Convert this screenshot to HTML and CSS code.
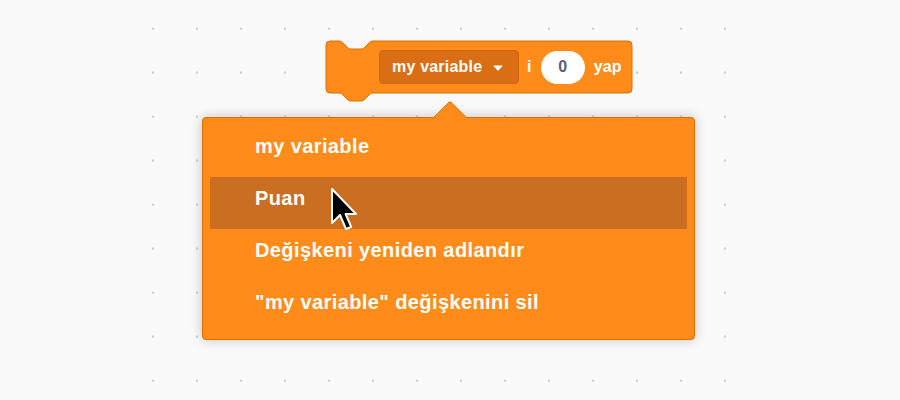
FILE: index.html
```html
<!DOCTYPE html>
<html lang="tr">
<head>
<meta charset="utf-8">
<title>Değişken menüsü</title>
<link rel="stylesheet" href="styles.css">
</head>
<body>
<div class="workspace">
  <div class="grid"></div>

  <div class="block">
    <svg class="block-shape" width="308" height="62" viewBox="-1 -1 308 62">
      <path d="M0,4 A4,4 0 0 1 4,0 H13 c2,0 3,1 4,2 l4,4 c1,1 2,2 4,2 h10 c2,0 3,-1 4,-2 l4,-4 c1,-1 2,-2 4,-2 H302 a4,4 0 0 1 4,4 V48 a4,4 0 0 1 -4,4 H47 c-2,0 -3,1 -4,2 l-4,4 c-1,1 -2,2 -4,2 h-10 c-2,0 -3,-1 -4,-2 l-4,-4 c-1,-1 -2,-2 -4,-2 H4 a4,4 0 0 1 -4,-4 Z" fill="#FF8C1A" stroke="#DB6E00" stroke-width="1"/>
    </svg>
    <div class="block-row">
      <div class="dropdown">
        <span class="dropdown-text">my variable</span>
        <svg class="caret" width="10" height="6" viewBox="0 0 10 6"><path d="M0.8,0.6 H9.2 Q9.8,0.6 9.3,1.2 L5.6,5.2 Q5,5.8 4.4,5.2 L0.7,1.2 Q0.2,0.6 0.8,0.6 Z" fill="#fff"/></svg>
      </div>
      <span class="label">i</span>
      <div class="oval">0</div>
      <span class="label">yap</span>
    </div>
  </div>

  <div class="menu">
    <div class="menu-arrow"></div>
    <ul class="menu-list">
      <li class="menu-item">my variable</li>
      <li class="menu-item is-hover">Puan</li>
      <li class="menu-item">Değişkeni yeniden adlandır</li>
      <li class="menu-item">"my variable" değişkenini sil</li>
    </ul>
  </div>

  <svg class="cursor" width="30" height="46" viewBox="0 0 15 23">
    <path d="M1,1 L1,18 L5,14 L8,21 L10.6,19.9 L7.8,13.5 L13,13.5 Z" fill="#000" stroke="#fff" stroke-width="1" stroke-linejoin="round"/>
  </svg>
</div>
</body>
</html>
```

FILE: styles.css
```css
* {
  box-sizing: border-box;
}

html, body {
  margin: 0;
  padding: 0;
}

body {
  background: #f9f9f9;
  font-family: "Liberation Sans", Arial, sans-serif;
}

.workspace {
  position: relative;
  width: 900px;
  height: 400px;
  overflow: hidden;
  background: #f9f9f9;
}

.grid {
  position: absolute;
  left: 150px;
  top: 25px;
  width: 580px;
  height: 360px;
  background-image: radial-gradient(circle at 3px 3.7px, #cfcfcf 0, #d6d6d6 1px, rgba(249, 249, 249, 0) 1.7px);
  background-size: 44px 44px;
}

/* block on the canvas */
.block {
  position: absolute;
  left: 325px;
  top: 40px;
  width: 308px;
  height: 62px;
}

.block-shape {
  position: absolute;
  left: 0;
  top: 0;
}

.block-row {
  position: relative;
  display: flex;
  align-items: center;
  gap: 8px;
  height: 54px;
  padding-left: 54px;
  color: #fff;
  font-weight: bold;
  font-size: 16px;
  letter-spacing: 0.2px;
  white-space: nowrap;
}

.dropdown {
  flex: none;
  display: flex;
  align-items: center;
  justify-content: space-between;
  width: 140px;
  height: 34px;
  padding: 0 15px 0 12px;
  background: #DA6E14;
  border: 1px solid #D06610;
  border-radius: 4px;
}

.dropdown-text {
  white-space: nowrap;
}

.caret {
  flex: none;
  margin-top: 1px;
}

.label {
  line-height: 1;
}

.oval {
  flex: none;
  display: flex;
  align-items: center;
  justify-content: center;
  width: 44px;
  height: 33px;
  margin: 0 1px;
  border-radius: 17px;
  background: #fff;
  color: #575E75;
  letter-spacing: 0;
}

/* context menu */
.menu {
  position: absolute;
  left: 202px;
  top: 117px;
  width: 493px;
  height: 223px;
  background: #FF8C1A;
  border: 1px solid #DB6E00;
  border-radius: 4px;
  box-shadow: 0 0 12px rgba(0, 0, 0, 0.22);
}

.menu-arrow {
  position: absolute;
  left: 235px;
  top: -13px;
  width: 24px;
  height: 24px;
  background: #FF8C1A;
  border-top: 1px solid #E07A14;
  border-left: 1px solid #E07A14;
  border-top-left-radius: 4px;
  transform: rotate(45deg);
}

.menu-list {
  position: relative;
  list-style: none;
  margin: 0;
  padding: 7px 7px 6px;
}

.menu-item {
  height: 52px;
  padding: 0 0 10px 45px;
  line-height: 42px;
  color: #fff;
  font-size: 20px;
  font-weight: bold;
  letter-spacing: 0.4px;
  white-space: nowrap;
}

.menu-item.is-hover {
  background: #CA6F22;
}

.cursor {
  position: absolute;
  left: 330px;
  top: 187px;
}
```
